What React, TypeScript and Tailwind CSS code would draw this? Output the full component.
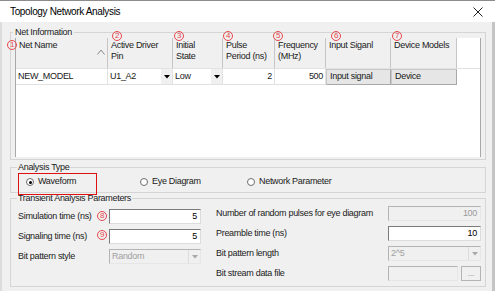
import React from 'react'

const cols = [
  { w: 'w-[92px]', head: ['Net Name'], sort: true },
  { w: 'w-[65px]', head: ['Active Driver', 'Pin'] },
  { w: 'w-[50px]', head: ['Initial', 'State'] },
  { w: 'w-[52px]', head: ['Pulse', 'Period (ns)'] },
  { w: 'w-[51px]', head: ['Frequency', '(MHz)'] },
  { w: 'w-[65px]', head: ['Input Siganl'] },
  { w: 'w-[66px]', head: ['Device Models'] },
]

function Mark({ n, className }: { n: number; className: string }) {
  return (
    <span
      className={`absolute flex h-[10px] w-[10px] items-center justify-center rounded-full border border-[#e8474c] text-[8px] leading-none text-[#e8474c] ${className}`}
    >
      {n}
    </span>
  )
}

function DropArrow({ disabled }: { disabled?: boolean }) {
  return (
    <svg width="6" height="4" viewBox="0 0 6 4">
      <path d="M0 0 L6 0 L3 3.5 Z" fill={disabled ? '#a8a8a8' : '#000'} />
    </svg>
  )
}

function TextBox({ value, disabled, w = 'w-full' }: { value: string; disabled?: boolean; w?: string }) {
  return (
    <div
      className={`flex h-[15px] ${w} items-center justify-end border px-[3px] ${
        disabled
          ? 'border-[#b4b4b4] border-b-[#e6e6e6] border-r-[#e6e6e6] bg-[#f0f0f0] text-[#9a9a9a]'
          : 'border-[#7a7a7a] border-b-[#dcdcdc] border-r-[#dcdcdc] bg-white text-black'
      }`}
    >
      {value}
    </div>
  )
}

function Combo({ value }: { value: string }) {
  return (
    <div className="flex h-[15px] w-full items-center border border-[#b4b4b4] border-b-[#e6e6e6] border-r-[#e6e6e6] bg-[#f0f0f0] pl-[2px] text-[#a0a0a0]">
      <span className="flex-1">{value}</span>
      <span className="flex h-full w-[12px] items-center justify-center border-l border-[#dcdcdc]">
        <DropArrow disabled />
      </span>
    </div>
  )
}

function Radio({ label, checked }: { label: string; checked?: boolean }) {
  return (
    <div className="flex items-center gap-[4px]">
      <span className="flex h-[8px] w-[8px] items-center justify-center rounded-full border border-[#6e6e6e] bg-white">
        {checked && <span className="h-[3px] w-[3px] rounded-full bg-black" />}
      </span>
      <span>{label}</span>
    </div>
  )
}

export default function App() {
  return (
    <div className="relative flex h-[291px] w-[495px] flex-col overflow-hidden font-['Liberation_Sans',Arial,sans-serif] text-[9px] tracking-[-0.3px] text-[#1a1a1a]">
      <div className="flex h-[22px] shrink-0 items-center justify-between border-t border-[#8c8c8c] bg-white pl-[10px] pr-[12px]">
        <span className="text-[10px] tracking-[-0.35px] text-black">Topology Network Analysis</span>
        <svg width="10" height="10" viewBox="0 0 10 10">
          <path d="M0.5 0.5 L9.5 9.5 M9.5 0.5 L0.5 9.5" stroke="#222" strokeWidth="1" />
        </svg>
      </div>

      <div className="flex flex-1 flex-col border-l-[2px] border-r-[3px] border-l-[#dcdcdc] border-r-[#c4c4c4] bg-[#f0f0f0] pl-[8px]">
        <fieldset className="mt-[5px] w-[476px] border border-[#d5d5d5] pb-[2px] pl-[4px] pt-[1px]">
          <legend className="ml-[-2px] px-[2px] leading-[10px]">Net Information</legend>
          <div className="h-[119px] w-[466px] border-l border-r border-[#a8a8a8] bg-white">
            <div className="flex h-[30px]">
              {cols.map((c, i) => (
                <div
                  key={i}
                  className={`relative ${c.w} border-r border-[#c6c6c6] bg-[#f0f0f0] pl-[3px] pt-[2px] leading-[11px]`}
                >
                  {c.head.map((h) => (
                    <div key={h}>{h}</div>
                  ))}
                  {c.sort && (
                    <svg className="absolute right-[2px] top-[11px]" width="8" height="6" viewBox="0 0 8 6">
                      <path d="M0.5 5.5 L4 1 L7.5 5.5" fill="none" stroke="#8a8a8a" strokeWidth="1" />
                    </svg>
                  )}
                </div>
              ))}
            </div>
            <div className="flex h-[17px] border-t border-[#e2e2e2]">
              <div className="flex w-[92px] items-center border-r border-b border-[#e2e2e2] pl-[2px]">NEW_MODEL</div>
              <div className="flex w-[65px] items-center border-r border-b border-[#e2e2e2] pl-[2px]">
                <span className="flex-1">U1_A2</span>
                <span className="flex h-full w-[11px] items-center justify-center bg-[#f0f0f0]">
                  <DropArrow />
                </span>
              </div>
              <div className="flex w-[50px] items-center border-r border-b border-[#e2e2e2] pl-[2px]">
                <span className="flex-1">Low</span>
                <span className="flex h-full w-[11px] items-center justify-center bg-[#f0f0f0]">
                  <DropArrow />
                </span>
              </div>
              <div className="flex w-[52px] items-center justify-end border-r border-b border-[#e2e2e2] pr-[2px]">2</div>
              <div className="flex w-[51px] items-center justify-end border-r border-b border-[#e2e2e2] pr-[2px]">500</div>
              <div className="flex w-[65px] items-center border border-[#c8c8c8] border-b-[#a8a8a8] border-r-[#a8a8a8] bg-[#e6e6e6] pl-[3px]">
                Input signal
              </div>
              <div className="flex w-[66px] items-center border border-[#c8c8c8] border-b-[#a8a8a8] border-r-[#a8a8a8] bg-[#e6e6e6] pl-[3px]">
                Device
              </div>
            </div>
          </div>
        </fieldset>

        <fieldset className="mt-[2px] w-[476px] border border-[#d5d5d5]">
          <legend className="ml-[6px] px-[1px] leading-[10px]">Analysis Type</legend>
          <div className="flex h-[20px] items-center pl-[15px]">
            <div className="w-[114px]">
              <Radio label="Waveform" checked />
            </div>
            <div className="w-[107px]">
              <Radio label="Eye Diagram" />
            </div>
            <Radio label="Network Parameter" />
          </div>
        </fieldset>

        <fieldset className="w-[476px] border border-[#d5d5d5] pb-[5px]">
          <legend className="ml-[6px] px-[1px] leading-[10px]">Transient Analysis Parameters</legend>
          <div className="flex pl-[7px]">
            <div className="flex flex-col gap-[5px] pt-[6px]">
              <div className="flex h-[15px] items-center">
                <span className="w-[91px]">Simulation time (ns)</span>
                <div className="w-[92px]">
                  <TextBox value="5" />
                </div>
              </div>
              <div className="flex h-[15px] items-center">
                <span className="w-[91px]">Signaling time (ns)</span>
                <div className="w-[92px]">
                  <TextBox value="5" />
                </div>
              </div>
              <div className="flex h-[15px] items-center">
                <span className="w-[91px]">Bit pattern style</span>
                <div className="w-[92px]">
                  <Combo value="Random" />
                </div>
              </div>
            </div>
            <div className="ml-[15px] flex flex-col gap-[5px] pt-[3px]">
              <div className="flex h-[15px] items-center">
                <span className="w-[172px]">Number of random pulses for eye diagram</span>
                <div className="w-[93px]">
                  <TextBox value="100" disabled />
                </div>
              </div>
              <div className="flex h-[15px] items-center">
                <span className="w-[172px]">Preamble time (ns)</span>
                <div className="w-[93px]">
                  <TextBox value="10" />
                </div>
              </div>
              <div className="flex h-[15px] items-center">
                <span className="w-[172px]">Bit pattern length</span>
                <div className="w-[93px]">
                  <Combo value="2^5" />
                </div>
              </div>
              <div className="flex h-[15px] items-center">
                <span className="w-[172px]">Bit stream data file</span>
                <div className="flex w-[93px] gap-[3px]">
                  <TextBox value="" disabled w="w-[70px]" />
                  <div className="flex h-[15px] w-[20px] items-center justify-center border border-[#b4b4b4] bg-[#f0f0f0] text-[#a0a0a0]">
                    ...
                  </div>
                </div>
              </div>
            </div>
          </div>
        </fieldset>
      </div>

      <Mark n={1} className="left-[7px] top-[40px]" />
      <Mark n={2} className="left-[112px] top-[31px]" />
      <Mark n={3} className="left-[174px] top-[31px]" />
      <Mark n={4} className="left-[223px] top-[31px]" />
      <Mark n={5} className="left-[273px] top-[31px]" />
      <Mark n={6} className="left-[331px] top-[31px]" />
      <Mark n={7} className="left-[392px] top-[31px]" />
      <Mark n={8} className="left-[97px] top-[211px]" />
      <Mark n={9} className="left-[97px] top-[230px]" />
      <div className="absolute left-[18px] top-[173px] h-[22px] w-[79px] border-[1.5px] border-[#e01010]" />
    </div>
  )
}
